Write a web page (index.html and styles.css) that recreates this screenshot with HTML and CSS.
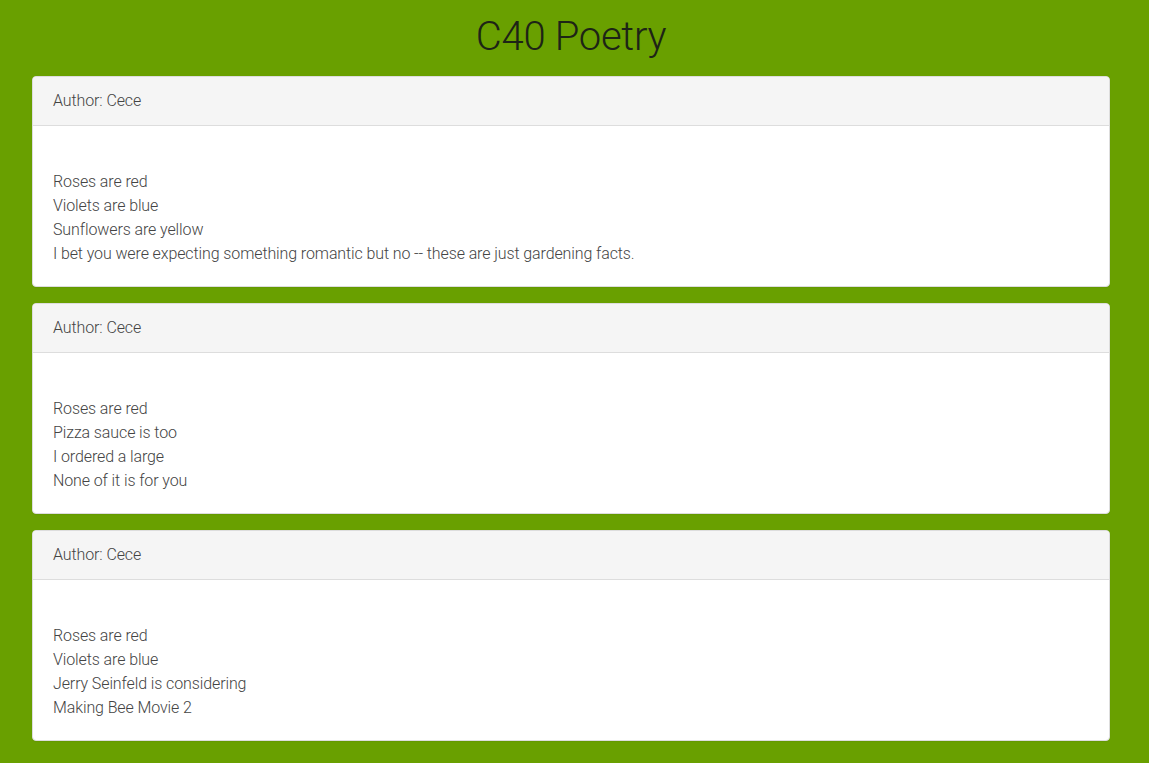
FILE: index.html
```html
<!DOCTYPE html>
<html>
<head>
<meta charset="utf-8">
<title>C40 Poetry</title>
<link rel="stylesheet" href="styles.css">
</head>
<body>
<div class="page">
  <h1 class="title">C40 Poetry</h1>
  <div class="panel">
    <div class="panel-heading">Author: Cece</div>
    <div class="panel-body">
      <br>Roses are red<br>Violets are blue<br>Sunflowers are yellow<br>I bet you were expecting something romantic but no -- these are just gardening facts.
    </div>
  </div>
  <div class="panel">
    <div class="panel-heading">Author: Cece</div>
    <div class="panel-body">
      <br>Roses are red<br>Pizza sauce is too<br>I ordered a large<br>None of it is for you
    </div>
  </div>
  <div class="panel">
    <div class="panel-heading">Author: Cece</div>
    <div class="panel-body">
      <br>Roses are red<br>Violets are blue<br>Jerry Seinfeld is considering<br>Making Bee Movie 2
    </div>
  </div>
</div>
</body>
</html>
```

FILE: styles.css
```css
html, body {
  margin: 0;
  padding: 0;
}
body {
  background: #69a000;
  font-family: "Roboto Light", Roboto, "Liberation Sans", sans-serif;
  font-weight: 300;
  font-size: 16px;
  line-height: 24px;
  color: #444;
  letter-spacing: -0.11px;
}
.page {
  padding: 15px 39px 6px 32px;
}
.title {
  margin: 0 0 17px;
  text-align: center;
  font-size: 40px;
  line-height: 44px;
  font-weight: 300;
  letter-spacing: -0.3px;
  color: #1d2416;
}
.panel {
  background: #fff;
  border: 1px solid #ddd;
  border-radius: 4px;
  margin-bottom: 16px;
  box-shadow: 0 1px 1px rgba(0,0,0,0.05);
  overflow: hidden;
}
.panel-heading {
  background: #f5f5f5;
  border-bottom: 1px solid #ddd;
  padding: 12px 20px;
}
.panel-body {
  padding: 20px;
}
```
